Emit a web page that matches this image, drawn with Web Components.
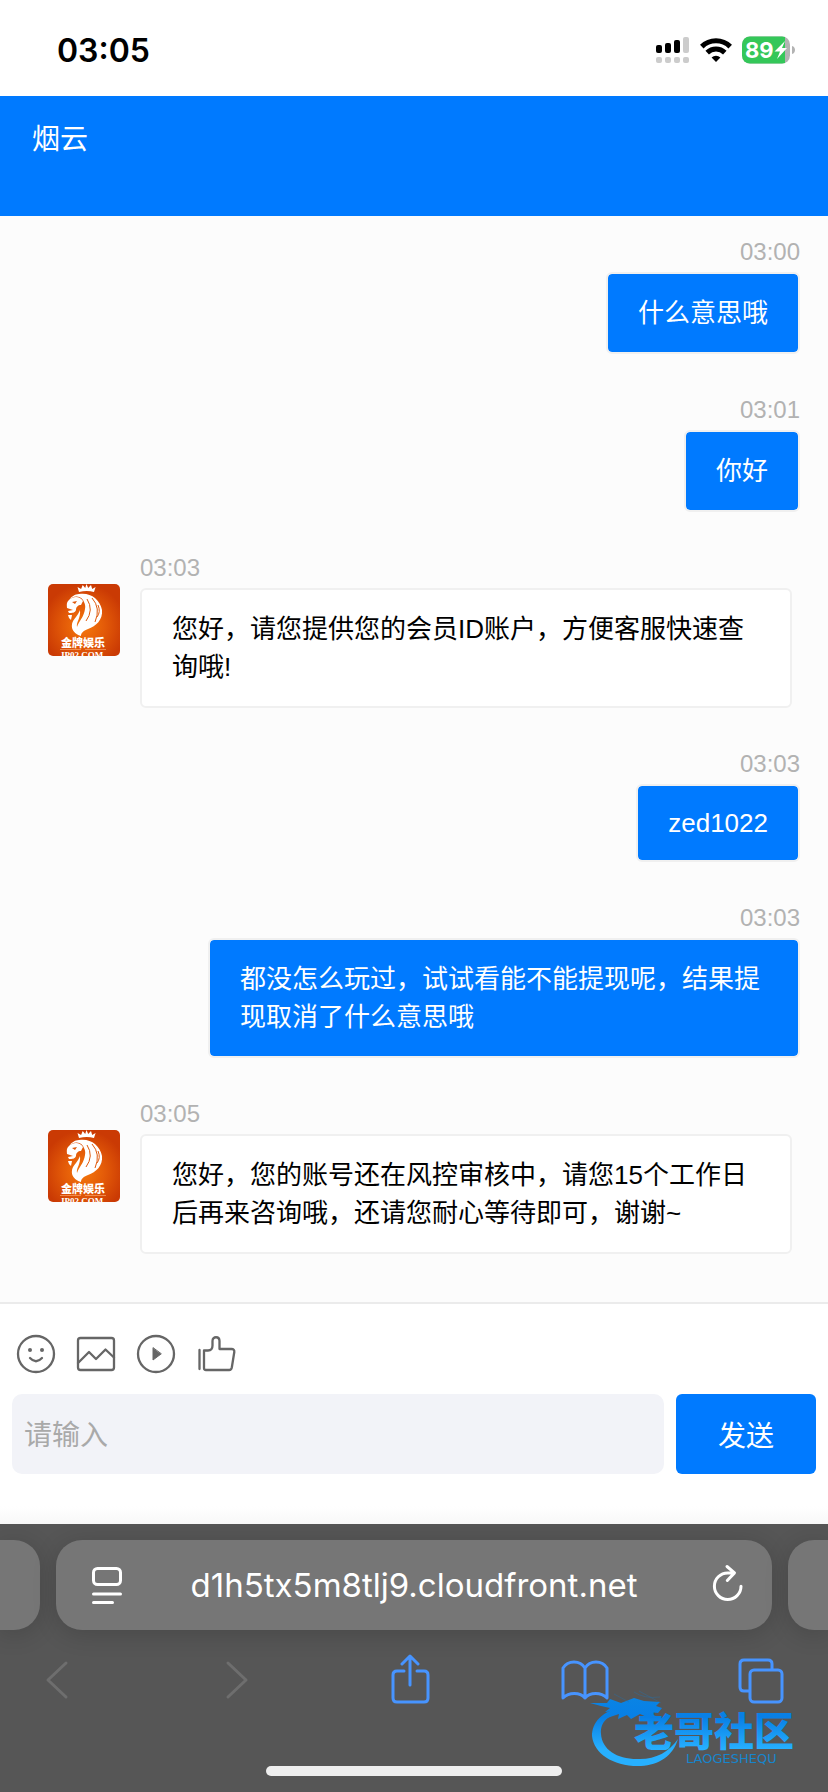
<!DOCTYPE html>
<html lang="zh-CN">
<head>
<meta charset="utf-8">
<meta name="viewport" content="width=device-width, initial-scale=1">
<title>烟云</title>
<style>
    body {
        margin: 0;
        background: #fff;
        font-family: "Liberation Sans", "Noto Sans CJK SC", sans-serif;
        color: #000;
    }
</style>
</head>
<body>
<chat-app></chat-app>

<script>
class StatusBar extends HTMLElement {
    constructor() {
        super();
        this.shadowDOM = this.attachShadow({mode: 'open'});
        this.render();
    }

    render() {
        this.shadowDOM.innerHTML = `
        <style>
            :host {
                display: flex;
                align-items: center;
                justify-content: space-between;
                box-sizing: border-box;
                height: 96px;
                padding: 4px 33px 0 57px;
                background: #fff;
                font-family: Inter, sans-serif;
            }
            time {
                font-size: 32px;
                font-weight: 600;
            }
            .icons {
                display: flex;
                align-items: center;
                gap: 10px;
            }
            svg {
                display: block;
            }
            text {
                font-size: 22px;
                font-weight: 700;
            }
        </style>

        <time>03:05</time>
        <div class="icons">
            <svg width="34" height="28" viewBox="0 0 34 28">
                <rect x="0" y="9" width="6" height="8" rx="2"/>
                <rect x="9" y="7" width="6" height="10" rx="2"/>
                <rect x="18" y="4" width="6" height="13" rx="2"/>
                <rect x="27" y="1" width="6" height="16" rx="2" fill="#ccc"/>
                <g fill="#ccc">
                    <rect x="0" y="21" width="6" height="6" rx="2"/>
                    <rect x="9" y="21" width="6" height="6" rx="2"/>
                    <rect x="18" y="21" width="6" height="6" rx="2"/>
                    <rect x="27" y="21" width="6" height="6" rx="2"/>
                </g>
            </svg>
            <svg width="32" height="26" viewBox="0 0 32 26">
                <g fill="none" stroke="#000" stroke-width="5">
                    <path d="M1.8 9.6a20.2 20.2 0 0 1 28.4 0"/>
                    <path d="M7.2 15.6a12.6 12.6 0 0 1 17.6 0"/>
                </g>
                <path d="M11.6 20.400a6.4 6.4 0 0 1 8.8 0L16 25z"/>
            </svg>
            <svg width="53" height="28" viewBox="0 0 53 28">
                <defs><clipPath id="cell"><rect y="0.5" width="48" height="27" rx="8"/></clipPath></defs>
                <g clip-path="url(#cell)">
                    <rect width="53" height="28" fill="#b3b3b3"/>
                    <rect width="43" height="28" fill="#34c759"/>
                </g>
                <path d="M50 10c4 1 4 7 0 8z" fill="#b3b3b3"/>
                <text x="3" y="22" fill="#fff">89</text>
                <path d="M43 5L32.500 15.500h5.500L35 23l10-11h-5z" fill="#fff"/>
            </svg>
        </div>
        `;
    }
}

class ChatHeader extends HTMLElement {
    constructor() {
        super();
        this.shadowDOM = this.attachShadow({mode: 'open'});
        this.shadowDOM.innerHTML = `
        <style>
            :host {
                display: block;
                box-sizing: border-box;
                height: 120px;
                padding: 24px 32px;
                background: #007aff;
                color: #fff;
            }
            h1 {
                margin: 0;
                font-size: 28px;
                font-weight: 400;
                line-height: 40px;
            }
        </style>

        <h1><slot></slot></h1>
        `;
    }
}

class AgentAvatar extends HTMLElement {
    constructor() {
        super();
        this.shadowDOM = this.attachShadow({mode: 'open'});
        this.shadowDOM.innerHTML = `
        <style>
            :host {
                display: block;
                width: 72px;
                height: 72px;
                border-radius: 5px;
                overflow: hidden;
            }
            svg {
                display: block;
            }
            .name {
                font: 900 11px "Noto Sans CJK SC", sans-serif;
            }
            .site {
                font: 700 9px "Liberation Serif", serif;
            }
        </style>

        <svg width="72" height="72" viewBox="0 0 72 72" fill="#fff">
            <defs>
                <radialGradient id="glow" cx="50%" cy="58%" r="58%">
                    <stop offset="0" stop-color="#f5780c"/>
                    <stop offset="0.5" stop-color="#e35a08"/>
                    <stop offset="1" stop-color="#ca3a04"/>
                </radialGradient>
            </defs>
            <rect width="72" height="72" fill="url(#glow)"/>
            <path d="M31 8L29.500 3l3.600 2 1.600-4 2.500 3L38.500 0l1.700 4L43 1l1.200 4 3.400-2L46 8q-7-2-15 0z"/>
            <!-- mane -->
            <path d="M31 10C42 8 52 15 54 26c1 10-6 16-14 19-5 2-7 4-7 7-6-2-10-6-9-12 1-5 6-8 8-14 1 8-4 12-3 17 2-6 7-10 8-18 1-4-1-7-2-9-4-5-10-4-14 0 2-3 6-6 10-6z"/>
            <!-- face -->
            <path d="M21 16c4-4 11-4 14 1l-2 4c-3 0-5 2-5 5-1 3-4 3-7 3l-1-2 5-1-6-2c0-3-1-5 2-8z"/>
            <path d="M20 31h4l-1 5-2-2z"/>
            <path d="M24 18l5-1-2 3z" fill="#df590b"/>
            <path d="M44 14q9 10 3 24M39 15q7 11-1 22M50 21q3 7-1 12" fill="none" stroke="#df590b"/>
            <text class="name" x="13" y="63">金牌娱乐</text>
            <path d="M12 65.500h21M37 65.500h21" stroke="#ffb27a" stroke-width="0.600"/>
            <text class="site" x="12" y="74">JP02.COM</text>
        </svg>
        `;
    }
}

class ChatMessage extends HTMLElement {
    constructor() {
        super();
        this.shadowDOM = this.attachShadow({mode: 'open'});
    }

    connectedCallback() {
        this.render();
    }

    render() {
        const agent = this.getAttribute('from') === 'agent';
        this.shadowDOM.innerHTML = `
        <style>
            :host {
                display: flex;
                gap: 20px;
                padding: 0 28px 0 208px;
                line-height: 38px;
            }
            :host([from="agent"]) {
                padding: 0 36px 0 48px;
            }
            :host([lang="en"]) {
                line-height: 34px;
            }
            agent-avatar {
                flex: none;
                margin-top: 30px;
            }
            .col {
                display: flex;
                flex: 1;
                flex-direction: column;
                align-items: flex-end;
                gap: 6px;
            }
            :host([from="agent"]) .col {
                align-items: stretch;
            }
            time {
                font-size: 24px;
                line-height: 28px;
                color: #b2b2b2;
            }
            .bubble {
                margin: 0;
                padding: 20px 30px;
                border: 2px solid #f0f0f0;
                border-radius: 6px;
                background: #007aff;
                background-clip: padding-box;
                color: #fff;
                font-size: 26px;
            }
            :host([from="agent"]) .bubble {
                background: #fff;
                color: #000;
            }
        </style>

        ${agent ? '<agent-avatar></agent-avatar>' : ''}
        <div class="col">
            <time>${this.getAttribute('time')}</time>
            <p class="bubble"><slot></slot></p>
        </div>
        `;
    }
}

class ChatComposer extends HTMLElement {
    constructor() {
        super();
        this.shadowDOM = this.attachShadow({mode: 'open'});
        this.shadowDOM.innerHTML = `
        <style>
            * {
                box-sizing: border-box;
                font-family: inherit;
            }
            :host {
                display: block;
                padding: 30px 12px 50px;
                border-top: 2px solid #ebebeb;
                background: linear-gradient(#fff 92%, #f8f8f8);
            }
            .tools {
                display: flex;
                gap: 20px;
                padding: 0 4px 20px;
            }
            .tools button {
                width: 40px;
                height: 40px;
                padding: 0;
                border: 0;
                background: none;
            }
            svg {
                display: block;
                fill: none;
                stroke: #666;
                stroke-width: 2.3;
                stroke-linejoin: round;
                stroke-linecap: round;
            }
            form {
                display: flex;
                gap: 12px;
            }
            input {
                flex: 1;
                min-width: 0;
                height: 80px;
                padding: 4px 12px 0;
                border: 0;
                border-radius: 10px;
                background: #f2f3f8;
                font-size: 28px;
            }
            input::placeholder {
                color: #a9a9a9;
            }
            .send {
                width: 140px;
                height: 80px;
                padding: 0;
                border: 0;
                border-radius: 6px;
                background: #007aff;
                color: #fff;
                font-size: 28px;
            }
        </style>

        <div class="tools">
            <button type="button" aria-label="表情">
                <svg width="40" height="40">
                    <circle cx="20" cy="20" r="18"/>
                    <g fill="#666" stroke="none"><circle cx="14" cy="16" r="2"/><circle cx="26" cy="16" r="2"/></g>
                    <path d="M14 24q6 6.500 12 0"/>
                </svg>
            </button>
            <button type="button" aria-label="图片">
                <svg width="40" height="40">
                    <rect x="2" y="4" width="36" height="32" rx="2.500"/>
                    <path d="M2 29l11-11 7 7 9.500-9.500 8.500 8"/>
                </svg>
            </button>
            <button type="button" aria-label="视频">
                <svg width="40" height="40">
                    <circle cx="20" cy="20" r="18"/>
                    <path d="M17 14v12l8-6z" fill="#666" stroke-width="1"/>
                </svg>
            </button>
            <button type="button" aria-label="评价">
                <svg width="40" height="40">
                    <path d="M3.500 16v19M8 16.500h4c3 0 4.500-2 4.500-5V7c0-5 7-5 7 0v8h12c2 0 3 1 2.800 3l-2.500 15.500c-.3 1.500-1 2.500-2.600 2.500H10q-2 0-2-2z"/>
                </svg>
            </button>
        </div>
        <form>
            <input type="text" placeholder="请输入" aria-label="请输入">
            <button class="send" type="button">发送</button>
        </form>
        `;
    }
}

class ForumWatermark extends HTMLElement {
    constructor() {
        super();
        this.shadowDOM = this.attachShadow({mode: 'open'});
        this.shadowDOM.innerHTML = `
        <style>
            :host {
                display: block;
                pointer-events: none;
            }
            svg {
                display: block;
            }
            .name {
                font: 900 40px "Noto Sans CJK SC", sans-serif;
            }
            .latin {
                font: 13px "DejaVu Sans", sans-serif;
            }
        </style>

        <svg width="224" height="80" viewBox="0 0 224 80" fill="url(#water)">
            <defs>
                <linearGradient id="water" gradientUnits="userSpaceOnUse" x1="0" y1="8" x2="0" y2="72">
                    <stop offset="0" stop-color="#0a84e4"/>
                    <stop offset="0.300" stop-color="#087fe6"/>
                    <stop offset="0.800" stop-color="#27b0ff"/>
                    <stop offset="1" stop-color="#27b0ff"/>
                </linearGradient>
            </defs>
            <!-- tail -->
            <path d="M40 16C12 20 4 34 4 46c2 18 22 31 49 30 18-1 32-10 37-27-9 13-22 20-38 20C30 70 14 60 13 44 12 32 20 24 38 22z"/>
            <!-- dragon head -->
            <path d="M2 13l17 0 3-4 11 4 13-5 10 3 16 1-4 4 6 2-4 5-9-1 8 5-8 1-9-4-9 5-4-4-9 4 1-5-12 4 7-7-9 1 5-4-9-2z"/>
            <path d="M26 4l15 8M46 2q10 7 26 5M51 1l22 12" fill="none" stroke="#2270ac" stroke-width="0.800" opacity="0.500"/>
            <text class="name" x="46" y="56">老哥社区</text>
            <text class="latin" x="98" y="73" fill="#1685cc">LAOGESHEQU</text>
        </svg>
        `;
    }
}

class BrowserBar extends HTMLElement {
    constructor() {
        super();
        this.shadowDOM = this.attachShadow({mode: 'open'});
        this.shadowDOM.innerHTML = `
        <style>
            * {
                box-sizing: border-box;
            }
            :host {
                display: block;
                position: relative;
                padding: 16px 0;
                overflow: hidden;
                background: #565656;
                color: #fff;
                font-family: Inter, sans-serif;
            }
            .tabs {
                display: flex;
                gap: 16px;
                height: 90px;
            }
            .tab {
                display: flex;
                align-items: center;
                justify-content: space-between;
                flex: 1;
                padding: 0 16px;
                border-radius: 26px;
                background: #767676;
                box-shadow: 0 4px 24px rgba(0, 0, 0, 0.160);
                font-size: 33px;
            }
            .side {
                flex: none;
                width: 40px;
                padding: 0;
            }
            .prev {
                border-radius: 0 26px 26px 0;
            }
            .next {
                border-radius: 26px 0 0 26px;
            }
            button {
                padding: 0;
                border: 0;
                background: none;
            }
            svg {
                display: block;
                fill: none;
                stroke: currentColor;
                stroke-width: 3;
                stroke-linecap: round;
                stroke-linejoin: round;
            }
            nav {
                display: flex;
                justify-content: space-between;
                padding: 24px 43px 60px 33px;
                color: #4794ff;
            }
            nav button {
                width: 48px;
                height: 52px;
                color: inherit;
            }
            nav button:disabled {
                color: #6e6e6e;
            }
            .tab button {
                color: #fff;
            }
            .home {
                width: 296px;
                height: 10px;
                margin: 0 auto;
                border-radius: 5px;
                background: #eee;
            }
            forum-watermark {
                position: absolute;
                right: 16px;
                bottom: 22px;
            }
        </style>

        <div class="tabs">
            <div class="tab side prev"></div>
            <div class="tab">
                <button type="button" aria-label="页面菜单">
                    <svg width="54" height="54">
                        <rect x="21.500" y="10.500" width="27" height="16" rx="4"/>
                        <path d="M21.500 36h27M21.500 44.500h19"/>
                    </svg>
                </button>
                <span>d1h5tx5m8tlj9.cloudfront.net</span>
                <button type="button" aria-label="重新载入">
                    <svg width="54" height="54">
                        <path d="M39 28.200A13.300 13.300 0 1 1 25.700 14.900H32M25 8.500l7.500 6.400-7.200 7.600"/>
                    </svg>
                </button>
            </div>
            <div class="tab side next"></div>
        </div>
        <nav>
            <button type="button" aria-label="后退" disabled>
                <svg width="48" height="52"><path d="M33 9L15 26l18 17"/></svg>
            </button>
            <button type="button" aria-label="前进" disabled>
                <svg width="48" height="52"><path d="M19 9l18 17-18 17"/></svg>
            </button>
            <button type="button" aria-label="分享">
                <svg width="48" height="52"><path d="M19 17H12q-4 0-4 4v23q0 4 4 4h27q4 0 4-4V21q0-4-4-4h-7M25 31V3M17 10l8-8 8 8"/></svg>
            </button>
            <button type="button" aria-label="书签">
                <svg width="48" height="52"><path d="M24 14C19 6 7 6 2 14v30c6-6 17-6 22 0 5-6 16-6 22 0V14C41 6 29 6 24 14zV44"/></svg>
            </button>
            <button type="button" aria-label="标签页">
                <svg width="48" height="52"><path d="M12 37H7q-4 0-4-4V10q0-4 4-4h24q4 0 4 4v5"/><rect x="13" y="16" width="32" height="32" rx="4"/></svg>
            </button>
        </nav>
        <div class="home"></div>
        <forum-watermark></forum-watermark>
        `;
    }
}

class ChatApp extends HTMLElement {
    constructor() {
        super();
        this.shadowDOM = this.attachShadow({mode: 'open'});
        this.shadowDOM.innerHTML = `
        <style>
            :host {
                display: flex;
                flex-direction: column;
                min-height: 100vh;
            }
            main {
                display: flex;
                flex: 1;
                flex-direction: column;
                gap: 42px;
                padding: 22px 0 48px;
                background: #fcfcfc;
            }
        </style>

        <status-bar></status-bar>
        <chat-header>烟云</chat-header>
        <main>
            <chat-message time="03:00">什么意思哦</chat-message>
            <chat-message time="03:01">你好</chat-message>
            <chat-message from="agent" time="03:03">您好，请您提供您的会员ID账户，方便客服快速查询哦!</chat-message>
            <chat-message time="03:03" lang="en">zed1022</chat-message>
            <chat-message time="03:03">都没怎么玩过，试试看能不能提现呢，结果提现取消了什么意思哦</chat-message>
            <chat-message from="agent" time="03:05">您好，您的账号还在风控审核中，请您15个工作日后再来咨询哦，还请您耐心等待即可，谢谢~</chat-message>
        </main>
        <chat-composer></chat-composer>
        <browser-bar></browser-bar>
        `;
    }
}

customElements.define('status-bar', StatusBar);
customElements.define('chat-header', ChatHeader);
customElements.define('agent-avatar', AgentAvatar);
customElements.define('chat-message', ChatMessage);
customElements.define('chat-composer', ChatComposer);
customElements.define('forum-watermark', ForumWatermark);
customElements.define('browser-bar', BrowserBar);
customElements.define('chat-app', ChatApp);
</script>
</body>
</html>
